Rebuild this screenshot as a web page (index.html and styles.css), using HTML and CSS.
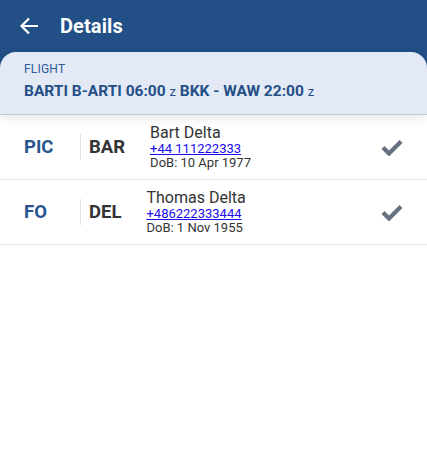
FILE: index.html
```html
<!DOCTYPE html>
<html>
<head>
<meta charset="utf-8">
<link rel="stylesheet" href="styles.css">
</head>
<body>
<div class="app">
  <header class="topbar">
    <svg class="back" width="20" height="18" viewBox="0 0 20 18"><path d="M19 9H3M10 1.5L2.5 9L10 16.5" fill="none" stroke="#fff" stroke-width="2.2"/></svg>
    <span class="title">Details</span>
  </header>
  <div class="flightcard">
    <div class="label">FLIGHT</div>
    <div class="flight">BARTI B-ARTI 06:00 <span class="z">z</span> BKK - WAW 22:00 <span class="z">z</span></div>
  </div>
  <div class="list">
    <div class="row first">
      <div class="role">PIC</div>
      <div class="divider"></div>
      <div class="code">BAR</div>
      <div class="info">
        <div class="name">Bart Delta</div>
        <a class="phone" href="#">+44 111222333</a>
        <div class="dob">DoB: 10 Apr 1977</div>
      </div>
      <svg class="check" width="22" height="18" viewBox="0 0 22 18"><path d="M2 9.5L8 15.5L20 3.5" fill="none" stroke="#667080" stroke-width="4.2"/></svg>
    </div>
    <div class="row">
      <div class="role">FO</div>
      <div class="divider"></div>
      <div class="code">DEL</div>
      <div class="info">
        <div class="name">Thomas Delta</div>
        <a class="phone" href="#">+486222333444</a>
        <div class="dob">DoB: 1 Nov 1955</div>
      </div>
      <svg class="check" width="22" height="18" viewBox="0 0 22 18"><path d="M2 9.5L8 15.5L20 3.5" fill="none" stroke="#667080" stroke-width="4.2"/></svg>
    </div>
  </div>
</div>
</body>
</html>
```
FILE: styles.css
```css
* { box-sizing: border-box; }
body { margin: 0; font-family: Roboto, "Noto Sans", sans-serif; background: #fff; }
.app { width: 427px; }
.topbar {
  background: #214f86;
  height: 70px;
  padding: 0 0 18px 19px;
  display: flex;
  align-items: center;
  color: #fff;
}
.back { margin-right: 21px; }
.title { font-size: 20px; font-weight: 700; letter-spacing: 0.1px; }
.flightcard {
  margin-top: -18px;
  background: #e3eaf6;
  border-radius: 16px 16px 0 0;
  padding: 10px 24px 14px;
  border-bottom: 1px solid #c8ccd2;
  position: relative;
  z-index: 1;
  box-shadow: 0 3px 10px rgba(0,0,0,0.10);
}
.label { font-size: 12px; color: #2b5b95; letter-spacing: 0.2px; }
.flight { margin-top: 6px; font-size: 15.5px; font-weight: 700; color: #244f86; }
.z { font-weight: 400; font-size: 13px; }
.row {
  display: flex;
  align-items: center;
  height: 65px;
  border-bottom: 1px solid #dfe4ea;
  padding-left: 24px;
  padding-right: 24px;
}
.role { width: 56px; font-size: 18.5px; font-weight: 700; color: #28558e; }
.divider { width: 1px; height: 26px; background: #dde3ea; margin-right: 8px; }
.code { font-size: 18.5px; font-weight: 700; color: #333; margin-right: 25px; }
.info { flex: 1; }
.name { font-size: 16px; line-height: 17px; color: #333; }
.phone { display: block; font-size: 13px; line-height: 15px; color: #1a0dee; text-decoration: underline; }
.dob { font-size: 13px; line-height: 14px; color: #333; }
.check { margin-right: 0; }
```
